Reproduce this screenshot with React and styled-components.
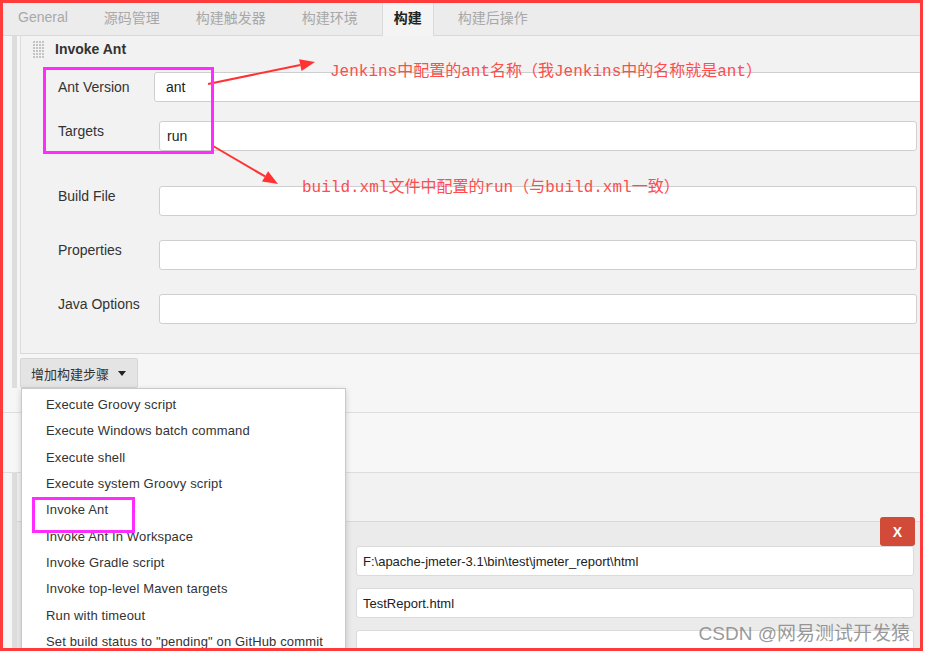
import React from 'react';
import styled, { createGlobalStyle } from 'styled-components';

const Global = createGlobalStyle`
  html, body { margin: 0; padding: 0; background: #ffffff; }
  body { font-family: "Liberation Sans", Arial, "Noto Sans CJK SC", sans-serif; }
  * { box-sizing: border-box; }
`;

const UI = `"Liberation Sans", Arial, "Noto Sans CJK SC", sans-serif`;

const Frame = styled.div`
  position: relative;
  width: 923px;
  height: 651px;
  border: 3px solid #ff3b3b;
  overflow: hidden;
  background: #f6f6f6;
  display: flex;
  flex-direction: column;
  font-family: ${UI};
`;

const TabBar = styled.div`
  display: flex;
  gap: 12px;
  height: 33px;
  padding-left: 3px;
  background: #ececec;
  border-bottom: 1px solid #d9d9d9;
  flex-shrink: 0;
`;

const Tab = styled.div`
  display: flex;
  align-items: center;
  padding: ${p => (p.$active ? 3 : 0)}px ${p => (p.$active ? 11 : 12)}px 5px;
  font-size: 14px;
  color: ${p => (p.$active ? '#222' : '#a8a8a8')};
  font-weight: ${p => (p.$active ? 700 : 400)};
  background: ${p => (p.$active ? '#f4f4f4' : 'transparent')};
  border-left: ${p => (p.$active ? '1px solid #dadada' : 'none')};
  border-right: ${p => (p.$active ? '1px solid #dadada' : 'none')};
  margin-bottom: ${p => (p.$active ? '-1px' : '0')};
  margin-top: ${p => (p.$active ? '-3px' : '0')};
`;

const BuildersArea = styled.div`
  padding-bottom: 24px;
  border-bottom: 1px solid #dedede;
  flex-shrink: 0;
`;

const Builders = styled.div`
  margin-left: 9px;
  border-left: 5px solid #dddddd;
  padding-left: 3px;
`;

const Section = styled.div`
  background: #f2f2f2;
  border-left: 1px solid #dcdcdc;
  border-bottom: 1px solid #d9d9d9;
  padding-bottom: 29px;
`;

const SectionHeader = styled.div`
  display: flex;
  align-items: center;
  gap: 10px;
  height: 26px;
  padding-left: 12px;
`;

const Title = styled.div`
  font-size: 14px;
  font-weight: 700;
  color: #333;
`;

const Row = styled.div`
  display: flex;
  align-items: flex-start;
  margin-top: ${p => p.$mt}px;
`;

const Label = styled.div`
  flex: 0 0 auto;
  width: 133px;
  padding-left: 37px;
  font-size: 14px;
  line-height: 16px;
  color: #333;
  padding-top: ${p => (p.$center ? 7 : 2)}px;
`;

const TextField = styled.input`
  flex: 1 1 auto;
  min-width: 0;
  height: 30px;
  margin-left: ${p => p.$ml || 0}px;
  margin-right: ${p => (p.$mr === undefined ? 3 : p.$mr)}px;
  padding: 0 0 0 ${p => p.$pl || 7}px;
  border: 1px solid #cfcfcf;
  border-radius: 3px;
  background: #ffffff;
  font-family: ${UI};
  font-size: 14px;
  color: #222;
  outline: none;
`;

const ButtonBar = styled.div`
  padding-top: 4px;
  background: #f6f6f6;
`;

const AddButton = styled.div`
  display: inline-flex;
  align-items: center;
  gap: 9px;
  width: 118px;
  height: 30px;
  padding-left: 10px;
  background: #e4e4e4;
  border: 1px solid #d6d6d6;
  border-radius: 2px;
  font-size: 13px;
  color: #333;
`;

const Caret = styled.span`
  width: 0;
  height: 0;
  border-left: 4px solid transparent;
  border-right: 4px solid transparent;
  border-top: 5px solid #222;
`;

const Band = styled.div`
  height: 60px;
  background: #f7f7f7;
  border-bottom: 1px solid #dedede;
  flex-shrink: 0;
`;

const Group = styled.div`
  flex: 1;
  margin-left: 9px;
  border-left: 5px solid #dddddd;
  display: flex;
  flex-direction: column;
`;

const GroupHead = styled.div`
  height: 48px;
  background: #f2f2f2;
`;

const PublishPanel = styled.div`
  position: relative;
  flex: 1;
  background: #ebebeb;
  border-top: 1px solid #d8d8d8;
  padding-top: 24px;
  display: flex;
  flex-direction: column;
  gap: 12px;
`;

const PathField = styled(TextField)`
  flex: 0 0 30px;
  margin-left: 339px;
  margin-right: 6px;
  padding-left: 6px;
  font-size: 13px;
  border-color: #dadada;
`;

const DeleteButton = styled.div`
  position: absolute;
  top: -5px;
  right: 5px;
  width: 35px;
  height: 29px;
  border-radius: 3px;
  background: #d24a38;
  color: #fff;
  font-weight: 700;
  font-size: 14px;
  display: flex;
  align-items: center;
  justify-content: center;
`;

const Menu = styled.div`
  position: absolute;
  left: 18px;
  top: 385px;
  width: 325px;
  height: 300px;
  background: #fff;
  border: 1px solid #c9c9c9;
  box-shadow: 0 2px 6px rgba(0, 0, 0, 0.18);
  padding-top: 3px;
`;

const MenuItem = styled.div`
  height: 26.33px;
  line-height: 26.33px;
  padding-left: 24px;
  font-size: 13px;
  letter-spacing: 0.15px;
  color: #333;
  white-space: nowrap;
`;

const MarkBox = styled.div`
  position: absolute;
  left: ${p => p.$x}px;
  top: ${p => p.$y}px;
  width: ${p => p.$w}px;
  height: ${p => p.$h}px;
  border: ${p => p.$b}px solid #ff2bff;
  pointer-events: none;
`;

const Note = styled.div`
  position: absolute;
  left: ${p => p.$x}px;
  top: ${p => p.$y}px;
  font-family: "Liberation Mono", "Noto Sans CJK SC", monospace;
  font-size: 16px;
  line-height: 20px;
  color: #ff4d4d;
  white-space: nowrap;
`;

const Overlay = styled.svg`
  position: absolute;
  left: 0;
  top: 0;
  pointer-events: none;
`;

const Watermark = styled.div`
  position: absolute;
  right: 10px;
  top: 619px;
  font-family: "Liberation Sans", "Noto Sans CJK SC", sans-serif;
  font-size: 19px;
  line-height: 24px;
  color: rgba(120, 120, 120, 0.75);
  white-space: nowrap;
`;

function Handle() {
  const dots = [];
  for (let r = 0; r < 6; r++) {
    for (let c = 0; c < 4; c++) {
      dots.push(<rect key={`${r}-${c}`} x={c * 3} y={r * 3} width="2" height="2" fill="#c4c4c4" />);
    }
  }
  return (
    <svg width="12" height="17" viewBox="0 0 12 17">
      {dots}
    </svg>
  );
}

function Arrow({ x1, y1, x2, y2 }) {
  const dx = x2 - x1;
  const dy = y2 - y1;
  const len = Math.hypot(dx, dy);
  const ux = dx / len;
  const uy = dy / len;
  const hl = 15;
  const hw = 6;
  const bx = x2 - ux * hl;
  const by = y2 - uy * hl;
  const p1 = `${bx - uy * hw},${by + ux * hw}`;
  const p2 = `${bx + uy * hw},${by - ux * hw}`;
  return (
    <g>
      <line x1={x1} y1={y1} x2={bx} y2={by} stroke="#f33" strokeWidth="2" />
      <polygon points={`${x2},${y2} ${p1} ${p2}`} fill="#f33" />
    </g>
  );
}

const tabs = ['General', '源码管理', '构建触发器', '构建环境', '构建', '构建后操作'];

const menuItems = [
  'Execute Groovy script',
  'Execute Windows batch command',
  'Execute shell',
  'Execute system Groovy script',
  'Invoke Ant',
  'Invoke Ant In Workspace',
  'Invoke Gradle script',
  'Invoke top-level Maven targets',
  'Run with timeout',
  'Set build status to "pending" on GitHub commit',
];

const fields = [
  { label: 'Ant Version', value: 'ant', mt: 10, center: true, ml: 0, mr: -10, pl: 11 },
  { label: 'Targets', value: 'run', mt: 19, ml: 5 },
  { label: 'Build File', value: '', mt: 35, ml: 5 },
  { label: 'Properties', value: '', mt: 24, ml: 5 },
  { label: 'Java Options', value: '', mt: 24, ml: 5 },
];

export default function App() {
  return (
    <>
      <Global />
      <Frame>
        <TabBar>
          {tabs.map(t => (
            <Tab key={t} $active={t === '构建'}>{t}</Tab>
          ))}
        </TabBar>

        <BuildersArea>
          <Builders>
            <Section>
              <SectionHeader>
                <Handle />
                <Title>Invoke Ant</Title>
              </SectionHeader>
              {fields.map(f => (
                <Row key={f.label} $mt={f.mt}>
                  <Label $center={f.center}>{f.label}</Label>
                  <TextField readOnly value={f.value} $ml={f.ml} $mr={f.mr} $pl={f.pl} />
                </Row>
              ))}
            </Section>
            <ButtonBar>
              <AddButton>
                增加构建步骤
                <Caret />
              </AddButton>
            </ButtonBar>
          </Builders>
        </BuildersArea>

        <Band />

        <Group>
          <GroupHead />
          <PublishPanel>
            <DeleteButton>X</DeleteButton>
            <PathField readOnly value={'F:\\apache-jmeter-3.1\\bin\\test\\jmeter_report\\html'} />
            <PathField readOnly value="TestReport.html" />
            <PathField readOnly value="" />
          </PublishPanel>
        </Group>

        <Menu>
          {menuItems.map(m => (
            <MenuItem key={m}>{m}</MenuItem>
          ))}
        </Menu>

        <Overlay width="920" height="648">
          <Arrow x1={205} y1={81} x2={312} y2={59} />
          <Arrow x1={210} y1={143} x2={275} y2={181} />
        </Overlay>

        <MarkBox $x={40} $y={64} $w={171} $h={87} $b={3} />
        <MarkBox $x={29} $y={494} $w={103} $h={36} $b={3} />

        <Note $x={327} $y={59}>Jenkins中配置的ant名称（我Jenkins中的名称就是ant）</Note>
        <Note $x={299} $y={175}>build.xml文件中配置的run（与build.xml一致）</Note>

        <Watermark>CSDN @网易测试开发猿</Watermark>
      </Frame>
    </>
  );
}
